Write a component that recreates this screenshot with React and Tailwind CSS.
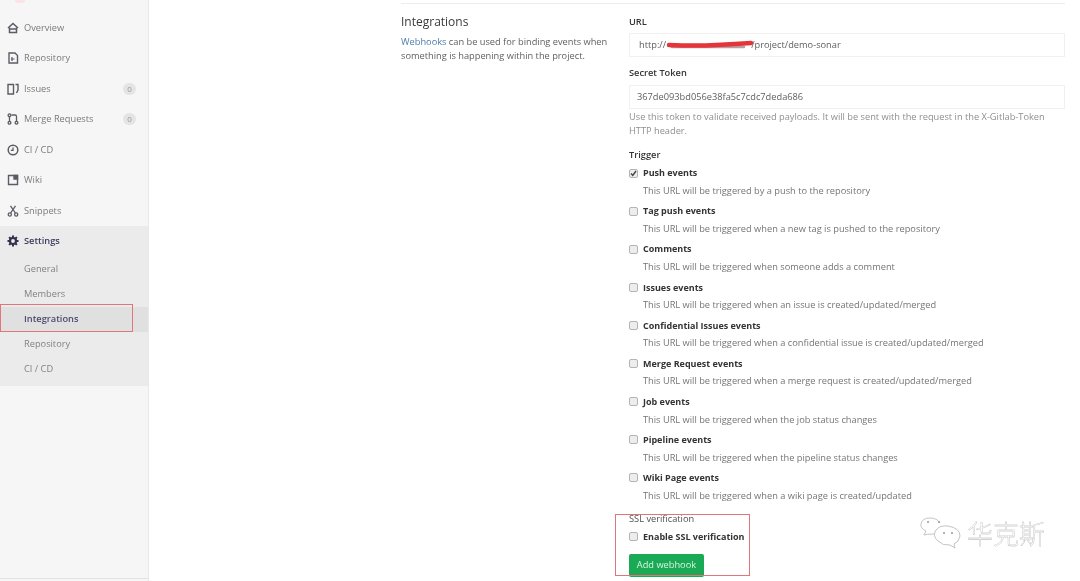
import React from "react";

const FONT = "font-['Open_Sans','Noto_Sans','Noto_Sans_CJK_SC',sans-serif]";

function HomeIcon() {
  return (
    <svg width="12" height="12" viewBox="0 0 12 12" fill="none" stroke="#5c5c66" strokeWidth="1.5">
      <path d="M1 6 L6 1.5 L11 6" />
      <path d="M2.5 5.5 V10.5 H9.5 V5.5" />
      <path d="M3 7 H9" />
    </svg>
  );
}

function RepoIcon() {
  return (
    <svg width="12" height="12" viewBox="0 0 12 12" fill="none" stroke="#5c5c66" strokeWidth="1.4">
      <path d="M2 1 H8 L10.5 3.5 V11 H2 Z" />
      <path d="M4 7 H7.5 M5 5 V9" strokeWidth="1.2" />
    </svg>
  );
}

function IssuesIcon() {
  return (
    <svg width="12" height="12" viewBox="0 0 12 12" fill="none" stroke="#5c5c66" strokeWidth="1.4">
      <path d="M1 1.5 H6.5 V11 H1 Z" />
      <path d="M8.5 1.5 H11 V7 L9.5 10" />
    </svg>
  );
}

function MergeIcon() {
  return (
    <svg width="12" height="12" viewBox="0 0 12 12" fill="none" stroke="#5c5c66" strokeWidth="1.3">
      <circle cx="2.5" cy="2.2" r="1.4" />
      <circle cx="2.5" cy="9.8" r="1.4" />
      <circle cx="9.5" cy="9.8" r="1.4" />
      <path d="M2.5 3.6 V8.4 M4.5 2 H8 Q9.5 2 9.5 3.5 V8.4" />
    </svg>
  );
}

function ClockIcon() {
  return (
    <svg width="12" height="12" viewBox="0 0 12 12" fill="none" stroke="#5c5c66" strokeWidth="1.5">
      <circle cx="6" cy="6" r="4.8" />
      <path d="M6 3.5 V6.3 H3.8" strokeWidth="1.3" />
    </svg>
  );
}

function WikiIcon() {
  return (
    <svg width="12" height="12" viewBox="0 0 12 12" fill="none" stroke="#5c5c66" strokeWidth="1.4">
      <path d="M1.5 1.5 H10.5 V10.5 H1.5 Z" />
      <path d="M7 1.5 H10.5 V5 H7 Z" fill="#5c5c66" />
    </svg>
  );
}

function SnippetIcon() {
  return (
    <svg width="12" height="12" viewBox="0 0 12 12" fill="none" stroke="#5c5c66" strokeWidth="1.3">
      <circle cx="2.8" cy="9.5" r="1.6" />
      <circle cx="9.2" cy="9.5" r="1.6" />
      <path d="M3.6 8 L8.5 0.8 M8.4 8 L3.5 0.8" />
    </svg>
  );
}

function GearIcon() {
  return (
    <svg width="12" height="12" viewBox="0 0 12 12" fill="none" stroke="#33334f">
      <circle cx="6" cy="6" r="3" strokeWidth="2.2" />
      <path d="M6 0.5 V2.5 M6 9.5 V11.5 M0.5 6 H2.5 M9.5 6 H11.5 M2.1 2.1 L3.5 3.5 M8.5 8.5 L9.9 9.9 M2.1 9.9 L3.5 8.5 M8.5 3.5 L9.9 2.1" strokeWidth="2" />
    </svg>
  );
}

const NAV = [
  { label: "Overview", icon: <HomeIcon /> },
  { label: "Repository", icon: <RepoIcon /> },
  { label: "Issues", icon: <IssuesIcon />, badge: "0" },
  { label: "Merge Requests", icon: <MergeIcon />, badge: "0" },
  { label: "CI / CD", icon: <ClockIcon /> },
  { label: "Wiki", icon: <WikiIcon /> },
  { label: "Snippets", icon: <SnippetIcon /> },
];

const SUB_NAV = ["General", "Members", "Integrations", "Repository", "CI / CD"];

const TRIGGERS = [
  ["Push events", "This URL will be triggered by a push to the repository", true],
  ["Tag push events", "This URL will be triggered when a new tag is pushed to the repository"],
  ["Comments", "This URL will be triggered when someone adds a comment"],
  ["Issues events", "This URL will be triggered when an issue is created/updated/merged"],
  ["Confidential Issues events", "This URL will be triggered when a confidential issue is created/updated/merged"],
  ["Merge Request events", "This URL will be triggered when a merge request is created/updated/merged"],
  ["Job events", "This URL will be triggered when the job status changes"],
  ["Pipeline events", "This URL will be triggered when the pipeline status changes"],
  ["Wiki Page events", "This URL will be triggered when a wiki page is created/updated"],
];

function Checkbox({ checked }) {
  return (
    <span className="flex h-[9px] w-[9px] shrink-0 items-center justify-center rounded-[2px] border border-[#b4b4b4] bg-[#ededed]">
      {checked && (
        <svg width="7" height="7" viewBox="0 0 7 7" fill="none" stroke="#444" strokeWidth="1.4">
          <path d="M1 3.5 L2.8 5.5 L6 1" />
        </svg>
      )}
    </span>
  );
}

function Sidebar() {
  return (
    <aside className="relative flex h-[581px] w-[149px] shrink-0 flex-col border-r border-[#e8e8e8] bg-[#f6f6f6] pt-[12.5px]">
      <div className="absolute left-[15px] top-0 h-[3px] w-[10px] rounded-b-full bg-[#fbe3e6]" />
      {NAV.map((item) => (
        <div key={item.label} className="flex h-[30.5px] items-center pl-[7px] pr-[12px] text-[9.25px] text-[#7a7a7a]">
          <span className="mr-[5px] flex w-[12px] justify-center">{item.icon}</span>
          <span className="flex-1">{item.label}</span>
          {item.badge && (
            <span className="flex h-[12px] w-[13px] items-center justify-center rounded-full bg-[#e4e4e4] text-[8px] text-[#999]">
              {item.badge}
            </span>
          )}
        </div>
      ))}
      <div className="h-[160px] bg-[#ebebeb]">
        <div className="flex h-[30px] items-center pl-[7px] text-[9.25px] font-semibold text-[#3b3b5c]">
          <span className="mr-[5px] flex w-[12px] justify-center">
            <GearIcon />
          </span>
          Settings
        </div>
        <div className="pt-[0.5px]">
          {SUB_NAV.map((label) => (
            <div
              key={label}
              className={
                label === "Integrations"
                  ? "flex h-[25px] items-center bg-[#e0e0e0] pl-[24px] text-[9.25px] font-semibold text-[#4a4a6e]"
                  : "flex h-[25px] items-center pl-[24px] text-[9.25px] text-[#828282]"
              }
            >
              {label}
            </div>
          ))}
        </div>
      </div>
      <div className="absolute bottom-[2px] left-0 right-0 h-px bg-[#e2e2e2]" />
      {/* red highlight drawn over the menu */}
      <div className="absolute left-0 top-[304px] h-[28px] w-[133px] border border-[#e2747c]" />
    </aside>
  );
}

function Main() {
  return (
    <main className="relative flex-1 pl-[252px] pr-[15px]">
      <div className="mt-[3px] h-px bg-[#ececec]" />
      <div className="flex">
        <section className="w-[228px] shrink-0 pt-[9px]">
          <h2 className="text-[12px] leading-[17px] font-normal text-[#3a3a3a]">Integrations</h2>
          <p className="mt-[5px] w-[212px] text-[9.25px] leading-[14px] text-[#606060]">
            <span className="text-[#4f7cac]">Webhooks</span> can be used for binding events when something is happening within the project.
          </p>
        </section>
        <section className="relative flex-1 pt-[11px] text-[9.25px] text-[#606060]">
          <div className="font-semibold leading-[14px] text-[#333]">URL</div>
          <div className="relative mt-[4px] flex h-[24px] items-center border border-[#f0f0f0] pl-[9px]">
            http://<span className="w-[85px]" />/project/demo-sonar
            <svg className="absolute left-[36px] top-[5px]" width="90" height="12" viewBox="0 0 90 12" fill="none">
              <path d="M6 8 Q30 8 50 8 T78 8" stroke="#b9a0a0" strokeWidth="2.5" strokeLinecap="round" />
              <path d="M3 6 Q30 7 50 6 T85 4" stroke="#e5343a" strokeWidth="4.5" strokeLinecap="round" />
            </svg>
          </div>
          <div className="mt-[9px] font-semibold leading-[14px] text-[#333]">Secret Token</div>
          <div className="mt-[5px] flex h-[24px] items-center border border-[#f0f0f0] pl-[7px]">367de093bd056e38fa5c7cdc7deda686</div>
          <p className="mt-[1px] leading-[14px] text-[#8f8f8f]">
            Use this token to validate received payloads. It will be sent with the request in the X-Gitlab-Token HTTP header.
          </p>
          <div className="mt-[10px] font-semibold leading-[14px] text-[#333]">Trigger</div>
          <div className="mt-[4px]">
            {TRIGGERS.map(([title, text, checked]) => (
              <div key={title} className="h-[38.1px]">
                <div className="flex h-[14px] items-center gap-[5px]">
                  <Checkbox checked={checked} />
                  <span className="text-[9px] font-bold text-[#333]">{title}</span>
                </div>
                <div className="mt-[4px] pl-[14px] leading-[14px] text-[#757575]">{text}</div>
              </div>
            ))}
          </div>
          <div className="mt-[3.5px] leading-[14px] text-[#505050]">SSL verification</div>
          <div className="mt-[3px] flex h-[14px] items-center gap-[5px]">
            <Checkbox />
            <span className="text-[9px] font-bold text-[#333]">Enable SSL verification</span>
          </div>
          <button type="button" className="mt-[10.5px] flex h-[23px] w-[75px] items-center justify-center rounded-[2px] bg-[#1aaa55] text-[9.25px] text-[#d8f5e2]">
            Add webhook
          </button>
          <div className="absolute left-[-14px] top-[510px] h-[62px] w-[135px] border border-[#e2747c]" />
        </section>
      </div>
    </main>
  );
}

function Watermark() {
  return (
    <div className="absolute left-[919px] top-[517px] flex items-center gap-[6px]">
      <svg width="42" height="32" viewBox="0 0 42 32" fill="none" stroke="#b5b5b5" strokeWidth="0.8">
        <path d="M15 17 Q7 17 5 18 L7 14 Q1 11 2 7 Q3 1 11 1 Q18 1 21 6" fill="#fff" />
        <path d="M19 24 Q13 19 17 13 Q21 8 29 9 Q41 11 41 19 Q40 25 35 27 L36 31 L31 28 Q24 29 19 24 Z" fill="#fff" />
        <circle cx="9" cy="5" r="1" fill="#999" stroke="none" />
        <circle cx="20" cy="5" r="1" fill="#999" stroke="none" />
        <circle cx="25" cy="16" r="1" fill="#999" stroke="none" />
        <circle cx="33" cy="16" r="1" fill="#999" stroke="none" />
      </svg>
      <span className="font-['Noto_Sans_CJK_SC',sans-serif] text-[26px] leading-none font-light text-white [-webkit-text-stroke:0.3px_#a8a8a8]">
        华克斯
      </span>
    </div>
  );
}

export default function App() {
  return (
    <div className={`relative flex h-[581px] w-[1080px] overflow-hidden bg-white blur-[0.3px] ${FONT}`}>
      <Sidebar />
      <Main />
      <Watermark />
    </div>
  );
}
